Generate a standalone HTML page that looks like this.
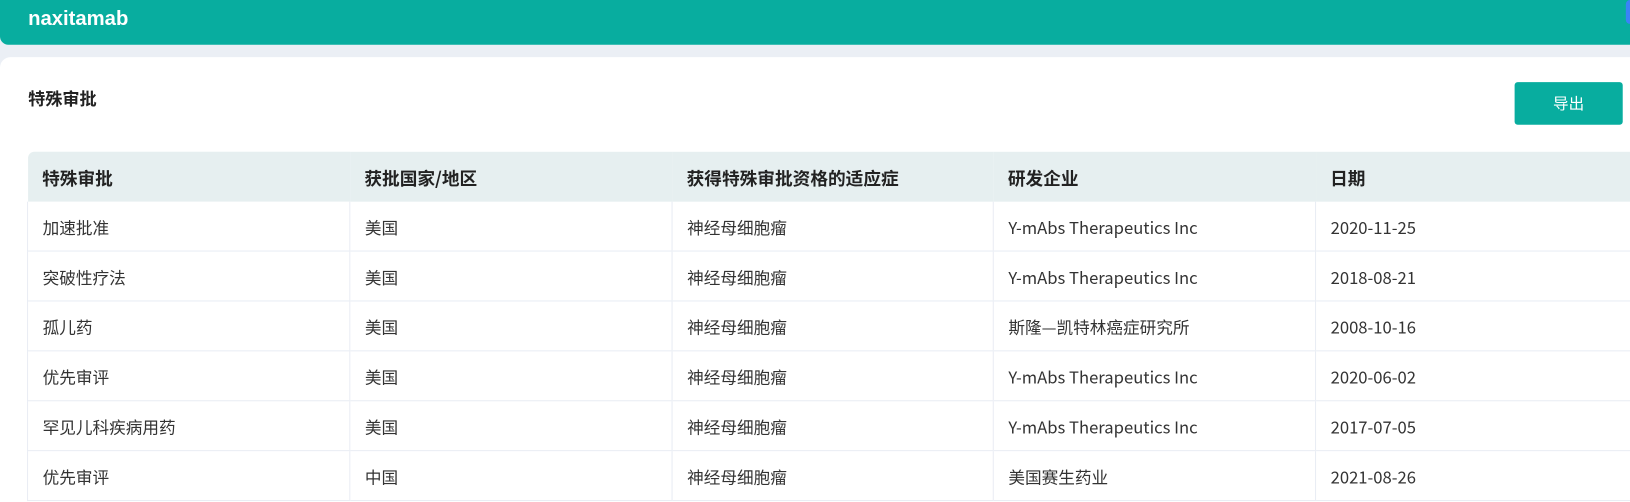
<!DOCTYPE html>
<html><head><meta charset="utf-8"><style>
body{margin:0;width:1630px;height:502px;overflow:hidden;background:#ebeff5;font-family:"Liberation Sans","Noto Sans CJK SC",sans-serif}
#w{position:absolute;left:0;top:0;width:1568px;height:483px;transform:scale(1.03954);transform-origin:0 0;overflow:hidden}
.top{position:absolute;left:0;top:0;width:1568px;height:43px;background:#08ad9f;border-radius:0 0 0 8px}
.top span{position:absolute;left:27px;top:7px;color:#fff;font-weight:bold;font-size:19.5px}
.blue{position:absolute;left:1564px;top:0;width:8px;height:23px;background:#3a82f7;border-radius:4px}
.card{position:absolute;left:0;top:55px;width:1580px;height:428px;background:#fff;border-radius:10px 0 0 0}
.title{position:absolute;left:27px;top:84px;font-size:16.5px;font-weight:bold;color:#222;font-family:"Noto Sans CJK SC",sans-serif;line-height:20px}
.btn{position:absolute;left:1457px;top:79px;width:104px;height:41px;background:#08ad9f;border-radius:3px;color:#fff;font-size:15px;text-align:center;line-height:41px;font-family:"Noto Sans CJK SC",sans-serif}
table{position:absolute;left:26px;top:146px;border-collapse:collapse;width:1560px;font-size:16px;color:#333;font-family:"Noto Sans CJK SC",sans-serif}
th{background:#e6eff0;height:48px;text-align:left;padding:0 0 0 14px;font-weight:bold;color:#222;font-size:17px}
td{height:47px;border-bottom:1px solid #e9edf4;border-left:1px solid #e9edf4;padding:0 0 0 14px;line-height:20px}
th:first-child{border-radius:6px 0 0 0}
</style></head><body><div id="w">
<div class="top"><span>naxitamab</span></div><div class="blue"></div>
<div class="card"></div>
<div class="title">特殊审批</div>
<div class="btn">导出</div>
<table>
<tr><th style="width:296px">特殊审批</th><th style="width:296px">获批国家/地区</th><th style="width:295px">获得特殊审批资格的适应症</th><th style="width:296px">研发企业</th><th>日期</th></tr>
<tr><td>加速批准</td><td>美国</td><td>神经母细胞瘤</td><td>Y-mAbs Therapeutics Inc</td><td>2020-11-25</td></tr>
<tr><td>突破性疗法</td><td>美国</td><td>神经母细胞瘤</td><td>Y-mAbs Therapeutics Inc</td><td>2018-08-21</td></tr>
<tr><td>孤儿药</td><td>美国</td><td>神经母细胞瘤</td><td>斯隆—凯特林癌症研究所</td><td>2008-10-16</td></tr>
<tr><td>优先审评</td><td>美国</td><td>神经母细胞瘤</td><td>Y-mAbs Therapeutics Inc</td><td>2020-06-02</td></tr>
<tr><td>罕见儿科疾病用药</td><td>美国</td><td>神经母细胞瘤</td><td>Y-mAbs Therapeutics Inc</td><td>2017-07-05</td></tr>
<tr><td>优先审评</td><td>中国</td><td>神经母细胞瘤</td><td>美国赛生药业</td><td>2021-08-26</td></tr>
</table>
</div></body></html>
